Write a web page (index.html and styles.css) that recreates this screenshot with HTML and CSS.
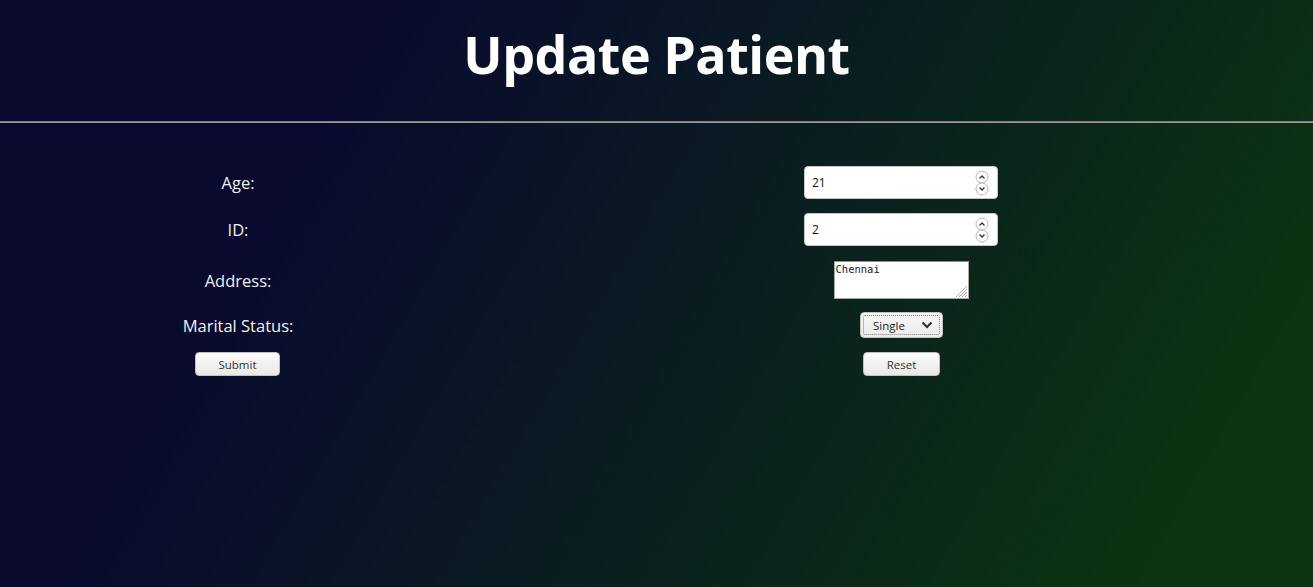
FILE: index.html
```html
<!DOCTYPE html>
<html lang="en">
<head>
<meta charset="utf-8">
<title>Update Patient</title>
<link rel="stylesheet" href="styles.css">
</head>
<body>
<header class="page-header">
  <h1 class="title">Update Patient</h1>
</header>
<hr class="rule">
<form class="patient-form">
  <label class="label" for="age">Age:</label>
  <div class="field">
    <div class="num-box">
      <input class="num-input" id="age" type="text" value="21">
      <svg class="spinner" width="14" height="26" viewBox="0 0 14 26">
        <rect x="1" y="1" width="12" height="12" rx="6" fill="#fff" stroke="#b9b6b1"/>
        <rect x="1" y="13" width="12" height="12" rx="6" fill="#fff" stroke="#b9b6b1"/>
        <path d="M4.5 8.5 L7 6 L9.5 8.5" fill="none" stroke="#333" stroke-width="1.3"/>
        <path d="M4.5 17.5 L7 20 L9.5 17.5" fill="none" stroke="#333" stroke-width="1.3"/>
      </svg>
    </div>
  </div>

  <label class="label" for="pid">ID:</label>
  <div class="field">
    <div class="num-box">
      <input class="num-input" id="pid" type="text" value="2">
      <svg class="spinner" width="14" height="26" viewBox="0 0 14 26">
        <rect x="1" y="1" width="12" height="12" rx="6" fill="#fff" stroke="#b9b6b1"/>
        <rect x="1" y="13" width="12" height="12" rx="6" fill="#fff" stroke="#b9b6b1"/>
        <path d="M4.5 8.5 L7 6 L9.5 8.5" fill="none" stroke="#333" stroke-width="1.3"/>
        <path d="M4.5 17.5 L7 20 L9.5 17.5" fill="none" stroke="#333" stroke-width="1.3"/>
      </svg>
    </div>
  </div>

  <label class="label label-addr" for="addr">Address:</label>
  <div class="field field-addr">
    <div class="area-box">
      <textarea class="area" id="addr">Chennai</textarea>
      <svg class="grip" width="14" height="14" viewBox="0 0 14 14">
        <path d="M13 2 L2 13 M13 5 L5 13 M13 8 L8 13 M13 11 L11 13" stroke="#a8a8a8" stroke-width="1"/>
      </svg>
    </div>
  </div>

  <label class="label" for="ms">Marital Status:</label>
  <div class="field">
    <div class="select-box">
      <div class="select-inner">
        <select class="select" id="ms">
          <option>Single</option>
          <option>Married</option>
        </select>
        <svg class="chev" width="12" height="8" viewBox="0 0 12 8">
          <path d="M1.5 1.5 L6 6 L10.5 1.5" fill="none" stroke="#2e2e2e" stroke-width="2"/>
        </svg>
      </div>
    </div>
  </div>

  <div class="field"><button class="btn btn-submit" type="submit">Submit</button></div>
  <div class="field"><button class="btn btn-reset" type="reset">Reset</button></div>
</form>
</body>
</html>
```

FILE: styles.css
```css
html, body {
  margin: 0;
  padding: 0;
}
body {
  min-height: 587px;
  background: linear-gradient(120deg, #090a2d 24%, #0b3410 90%);
  font-family: "Open Sans", "Noto Sans", sans-serif;
  color: #f2f2f2;
}
.page-header {
  display: flex;
  justify-content: center;
}
.title {
  margin: 22px 0 35px;
  font-size: 52px;
  line-height: 64px;
  font-weight: 700;
  color: #ffffff;
  letter-spacing: -0.5px;
}
.rule {
  margin: 0;
  height: 0;
  border: 0;
  border-top: 1px solid #7c7c7c;
  border-bottom: 1px solid #9b9b9b;
}
.patient-form {
  display: grid;
  grid-template-columns: 200px 300px;
  column-gap: 413px;
  row-gap: 14px;
  padding-left: 138px;
  margin-top: 43px;
  align-items: center;
}
.label {
  text-align: center;
  font-size: 16.5px;
  color: #f0f0f0;
}
.label-addr,
.field-addr {
  margin-top: 1px;
  margin-bottom: -1px;
}
.field {
  display: flex;
  justify-content: center;
}
.num-box {
  width: 194px;
  height: 33px;
  box-sizing: border-box;
  background: #fff;
  border: 1px solid #c8c6c2;
  border-radius: 4px;
  display: flex;
  align-items: center;
  padding: 0 8px 0 7px;
}
.num-input {
  flex: 1;
  min-width: 0;
  border: 0;
  outline: none;
  background: transparent;
  font-family: "Open Sans", "Noto Sans", sans-serif;
  font-size: 12px;
  color: #111;
  padding: 0;
}
.spinner {
  flex: none;
  display: block;
}
.area-box {
  position: relative;
  width: 135px;
  height: 38px;
}
.area {
  width: 135px;
  height: 38px;
  box-sizing: border-box;
  resize: none;
  border: 1px solid #a9a9a9;
  border-top-color: #8e8e8e;
  border-radius: 0;
  background: #fff;
  font-family: "DejaVu Sans Mono", "Liberation Mono", monospace;
  font-size: 10.5px;
  line-height: 13px;
  color: #222;
  padding: 1px 1px;
  display: block;
  outline: none;
}
.grip {
  position: absolute;
  right: 1px;
  bottom: 1px;
}
.select-box {
  width: 83px;
  height: 26px;
  box-sizing: border-box;
  border: 1px solid #c4c2be;
  border-radius: 4px;
  background: linear-gradient(#f7f7f6, #ecebea);
  padding: 2px;
  margin-left: 1px;
}
.select-inner {
  height: 100%;
  box-sizing: border-box;
  border: 1px dotted #7a7a7a;
  border-radius: 2px;
  display: flex;
  align-items: center;
  justify-content: space-between;
  padding: 0 6px 0 9px;
}
.select {
  appearance: none;
  -webkit-appearance: none;
  border: 0;
  background: transparent;
  font-family: "Open Sans", "Noto Sans", sans-serif;
  font-size: 11.5px;
  color: #1d1d1d;
  padding: 0;
  outline: none;
}
.chev {
  display: block;
}
.btn {
  height: 24px;
  box-sizing: border-box;
  border: 1px solid #c2c0bc;
  border-radius: 4px;
  background: linear-gradient(#fbfbfa, #e9e8e6);
  font-family: "Open Sans", "Noto Sans", sans-serif;
  font-size: 11.5px;
  color: #333;
  padding: 0;
}
.btn-submit {
  width: 85px;
  margin-left: -1px;
}
.btn-reset {
  width: 77px;
  margin-left: 1px;
}
```
